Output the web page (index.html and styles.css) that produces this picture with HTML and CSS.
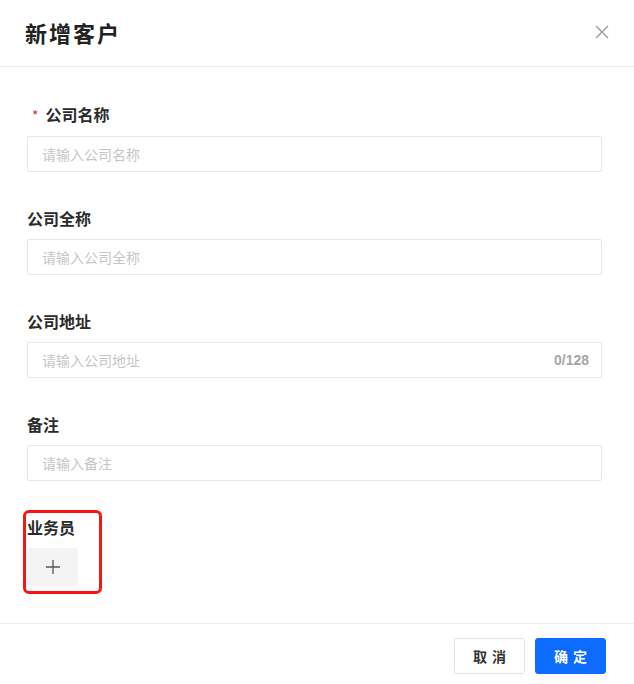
FILE: index.html
```html
<!DOCTYPE html>
<html lang="zh-CN">
<head>
<meta charset="utf-8">
<title>新增客户</title>
<link rel="stylesheet" href="styles.css">
</head>
<body>
<div class="modal">
  <header class="modal-header">
    <h1 class="modal-title">新增客户</h1>
    <button class="close-btn" aria-label="关闭">
      <svg width="14" height="14" viewBox="0 0 14 14"><path d="M1 1L13 13M13 1L1 13" stroke="#9a9a9a" stroke-width="1.4" fill="none"/></svg>
    </button>
  </header>
  <main class="modal-body">
    <div class="field">
      <label class="field-label"><span class="required">*</span>公司名称</label>
      <div class="input-box"><input class="input" placeholder="请输入公司名称"></div>
    </div>
    <div class="field">
      <label class="field-label">公司全称</label>
      <div class="input-box"><input class="input" placeholder="请输入公司全称"></div>
    </div>
    <div class="field">
      <label class="field-label">公司地址</label>
      <div class="input-box"><input class="input" placeholder="请输入公司地址"><span class="counter">0/128</span></div>
    </div>
    <div class="field">
      <label class="field-label">备注</label>
      <div class="input-box"><input class="input" placeholder="请输入备注"></div>
    </div>
    <div class="field field-last">
      <label class="field-label">业务员</label>
      <button class="add-btn" aria-label="添加">
        <svg width="16" height="16" viewBox="0 0 16 16"><path d="M8 1V15M1 8H15" stroke="#555" stroke-width="1.3" fill="none"/></svg>
      </button>
      <div class="highlight"></div>
    </div>
  </main>
  <footer class="modal-footer">
    <button class="btn btn-default">取消</button>
    <button class="btn btn-primary">确定</button>
  </footer>
</div>
</body>
</html>
```

FILE: styles.css
```css
* { box-sizing: border-box; }
html, body { margin: 0; padding: 0; background: #fff; }
body {
  font-family: "Noto Sans CJK SC", "Liberation Sans", sans-serif;
  color: #333;
}
.modal { width: 634px; height: 684px; display: flex; flex-direction: column; }
.modal-header {
  height: 68px;
  border-bottom: 1px solid #ececec;
  display: flex;
  align-items: center;
  justify-content: space-between;
  padding: 0 25px 0 25px;
}
.modal-title {
  margin: 0;
  font-size: 22px;
  font-weight: 700;
  color: #222;
  letter-spacing: 2px;
  line-height: 30px;
  margin-top: -2px;
}
.close-btn {
  border: 0;
  background: none;
  padding: 0;
  width: 14px;
  height: 14px;
  display: flex;
  margin-top: -3px;
}
.modal-body {
  flex: 1;
  padding: 36px 32px 0 27px;
}
.field { margin-bottom: 35px; }
.field-last { position: relative; margin-bottom: 0; }
.field-label {
  display: block;
  font-size: 16px;
  font-weight: 700;
  line-height: 22px;
  color: #2b2b2b;
  margin-bottom: 10px;
}
.required {
  color: #f5222d;
  font-size: 14px;
  margin: 0 7px 0 5px;
  font-weight: 400;
}
.input-box {
  height: 36px;
  border: 1px solid #e6e6e6;
  border-radius: 2px;
  display: flex;
  align-items: center;
  padding: 0 12px 0 14px;
}
.input {
  flex: 1;
  border: 0;
  outline: none;
  font: inherit;
  font-size: 14px;
  color: #333;
  padding: 0;
  background: transparent;
}
.input::placeholder { color: #c6c6c6; }
.counter {
  font-family: "Liberation Sans", Arial, sans-serif;
  font-size: 14px;
  color: #a6a6a6;
  font-weight: 700;
}
.add-btn {
  width: 51px;
  height: 38px;
  border: 0;
  border-radius: 4px;
  background: #f4f4f4;
  display: flex;
  align-items: center;
  justify-content: center;
  padding: 0;
}
.highlight {
  position: absolute;
  left: -4px;
  top: -6px;
  width: 79px;
  height: 84px;
  border: 3px solid #f81414;
  border-radius: 6px;
}
.modal-footer {
  border-top: 1px solid #ececec;
  padding: 14px 28px 10px 0;
  display: flex;
  justify-content: flex-end;
  gap: 10px;
  margin-top: 37px;
}
.btn {
  width: 71px;
  height: 36px;
  border-radius: 3px;
  font: inherit;
  font-size: 14px;
  letter-spacing: 5px;
  text-indent: 5px;
  padding: 0;
}
.btn-default { background: #fff; border: 1px solid #e3e3e3; color: #333; font-weight: 700; }
.btn-primary { background: #0b6cff; border: 1px solid #0b6cff; color: #fff; font-weight: 700; }
```
